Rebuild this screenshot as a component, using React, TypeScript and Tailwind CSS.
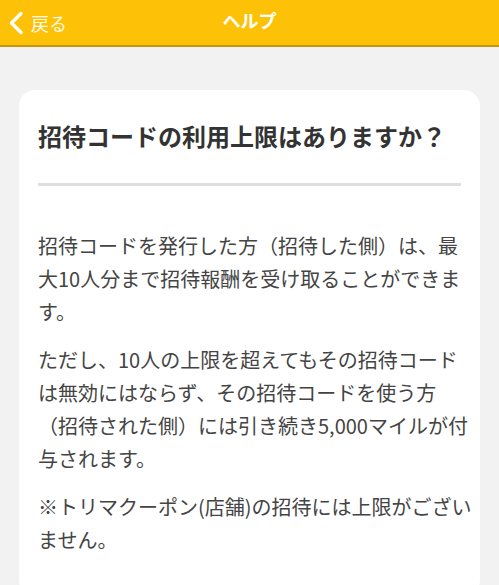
const font = { fontFamily: '"Noto Sans CJK JP", "Noto Sans", sans-serif' }

export default function App() {
  return (
    <div className="min-h-[585px] bg-[#f2f2f2]" style={font}>
      {/* Header bar */}
      <div className="relative flex h-[47px] items-center justify-center border-b-2 border-[#c8950e] bg-[#fdc208]">
        <div className="absolute left-[8px] top-0 flex h-[45px] items-center text-white">
          <svg width="16" height="24" viewBox="0 0 16 24" fill="none">
            <polyline
              points="13,2.5 3.5,12 13,21.5"
              stroke="white"
              strokeWidth="3.4"
              strokeLinecap="round"
              strokeLinejoin="round"
            />
          </svg>
          <span className="ml-[7px] text-[18px] leading-none text-white/90">戻る</span>
        </div>
        <span className="pb-[4px] text-[18px] font-bold text-white">ヘルプ</span>
      </div>

      {/* Question card */}
      <div className="mx-[19px] mt-[43px] rounded-[16px] bg-white pl-[19px] pr-[8px] pt-[28px] pb-[40px]">
        <h1 className="text-[24px] font-bold leading-[36px] text-[#333]">
          招待コードの利用上限はありますか？
        </h1>
        <div className="mr-[11px] mt-[29px] h-[3px] bg-[#dedede]" />
        <div className="mt-[43px] text-[20px] leading-[33px] text-[#444]">
          <p>招待コードを発行した方（招待した側）は、最大10人分まで招待報酬を受け取ることができます。</p>
          <p className="mt-[15px]">
            ただし、10人の上限を超えてもその招待コードは無効にはならず、その招待コードを使う方（招待された側）には引き続き5,000マイルが付与されます。
          </p>
          <p className="mt-[15px]">※トリマクーポン(店舗)の招待には上限がございません。</p>
        </div>
      </div>
    </div>
  )
}
